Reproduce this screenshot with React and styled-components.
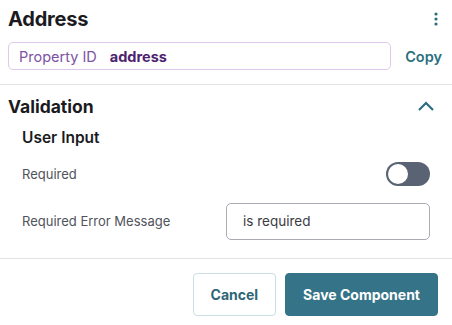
import React from 'react';
import styled, { createGlobalStyle } from 'styled-components';

const GlobalStyle = createGlobalStyle`
  body {
    margin: 0;
    background: #ffffff;
    font-family: Inter, "Noto Sans", sans-serif;
  }
`;

const App = () => {
  return (
    <>
      <GlobalStyle />
      <StyledPanel>
        <StyledHeader>
          <StyledTitle>Address</StyledTitle>
          <StyledIconButton aria-label="More">
            <svg width="4" height="14" viewBox="0 0 4 14">
              <circle cx="2" cy="2" r="1.6" fill="#2b6f80" />
              <circle cx="2" cy="7" r="1.6" fill="#2b6f80" />
              <circle cx="2" cy="12" r="1.6" fill="#2b6f80" />
            </svg>
          </StyledIconButton>
        </StyledHeader>
        <StyledIdRow>
          <StyledIdBox>
            <StyledIdLabel>Property ID</StyledIdLabel>
            <StyledIdValue>address</StyledIdValue>
          </StyledIdBox>
          <StyledLinkButton>Copy</StyledLinkButton>
        </StyledIdRow>
        <StyledDivider />
        <StyledSectionHeader>
          <StyledSectionTitle>Validation</StyledSectionTitle>
          <svg width="18" height="12" viewBox="0 0 18 12">
            <path d="M2 10 L9 3 L16 10" fill="none" stroke="#2b6f80" strokeWidth="2.2" />
          </svg>
        </StyledSectionHeader>
        <StyledGroup>
          <StyledGroupTitle>User Input</StyledGroupTitle>
          <StyledFieldRow height={40}>
            <StyledFieldLabel>Required</StyledFieldLabel>
            <StyledToggle>
              <StyledKnob />
            </StyledToggle>
          </StyledFieldRow>
          <StyledFieldRow height={46}>
            <StyledFieldLabel>Required Error Message</StyledFieldLabel>
            <StyledInput defaultValue="is required" />
          </StyledFieldRow>
        </StyledGroup>
        <StyledDivider />
        <StyledFooter>
          <StyledButton>Cancel</StyledButton>
          <StyledButton primary>Save Component</StyledButton>
        </StyledFooter>
      </StyledPanel>
    </>
  );
};

const StyledPanel = styled.div`
  width: 452px;
  height: 325px;
  display: flex;
  flex-direction: column;
  overflow: hidden;
`;

const StyledHeader = styled.div`
  display: flex;
  align-items: center;
  justify-content: space-between;
  padding: 4px 14px 0 8px;
  height: 30px;
`;

const StyledTitle = styled.h1`
  margin: 0;
  font-size: 20px;
  font-weight: 700;
  color: #1b1b1f;
  letter-spacing: -0.2px;
`;

const StyledIconButton = styled.button`
  border: none;
  background: none;
  padding: 0;
  display: flex;
  align-items: center;
`;

const StyledIdRow = styled.div`
  display: flex;
  align-items: center;
  padding: 8px 10px 0 8px;
  gap: 14px;
`;

const StyledIdBox = styled.div`
  flex: 1;
  height: 26px;
  border: 1px solid #dcc9ec;
  border-radius: 5px;
  display: flex;
  align-items: center;
  padding: 0 10px;
  gap: 13px;
  font-size: 14.5px;
`;

const StyledIdLabel = styled.span`
  color: #7d53a3;
`;

const StyledIdValue = styled.span`
  color: #4d2370;
  font-weight: 700;
`;

const StyledLinkButton = styled.button`
  border: none;
  background: none;
  padding: 0;
  font-family: inherit;
  font-size: 14.5px;
  font-weight: 600;
  color: #2b6f80;
`;

const StyledDivider = styled.div`
  height: 1px;
  background: #e1e3e6;
  margin-top: 14px;
`;

const StyledSectionHeader = styled.div`
  display: flex;
  align-items: center;
  justify-content: space-between;
  padding: 8px 17px 0 8px;
  height: 26px;
`;

const StyledSectionTitle = styled.h2`
  margin: 0;
  font-size: 17.5px;
  font-weight: 700;
  color: #1b1b1f;
`;

const StyledGroup = styled.div`
  padding: 5px 22px 0 22px;
  display: flex;
  flex-direction: column;
`;

const StyledGroupTitle = styled.h3`
  margin: 0;
  font-size: 15.5px;
  font-weight: 600;
  color: #1b1b1f;
  height: 26px;
  display: flex;
  align-items: center;
`;

const StyledFieldRow = styled.div`
  display: flex;
  align-items: center;
  justify-content: space-between;
  height: ${(p) => p.height}px;
  margin-top: 4px;
`;

const StyledFieldLabel = styled.span`
  font-size: 13px;
  color: #50535a;
`;

const StyledToggle = styled.div`
  width: 44px;
  height: 24px;
  border-radius: 12px;
  background: #5a6373;
  display: flex;
  align-items: center;
  padding: 2px;
  box-sizing: border-box;
`;

const StyledKnob = styled.div`
  width: 20px;
  height: 20px;
  border-radius: 50%;
  background: #ffffff;
`;

const StyledInput = styled.input`
  width: 204px;
  height: 37px;
  box-sizing: border-box;
  border: 1px solid #a9adb3;
  border-radius: 5px;
  padding: 0 16px;
  font-family: inherit;
  font-size: 13.5px;
  color: #3a3d42;
  outline: none;
`;

const StyledFooter = styled.div`
  display: flex;
  justify-content: flex-end;
  gap: 9px;
  padding: 14px 14px 0 0;
`;

const StyledButton = styled.button`
  height: 43px;
  padding: 0 17px;
  border-radius: 4px;
  font-family: inherit;
  font-size: 14px;
  font-weight: 700;
  border: 1px solid ${(p) => (p.primary ? '#357488' : '#c9dfe3')};
  background: ${(p) => (p.primary ? '#357488' : '#ffffff')};
  color: ${(p) => (p.primary ? '#ffffff' : '#2f6577')};
`;

export default App;
